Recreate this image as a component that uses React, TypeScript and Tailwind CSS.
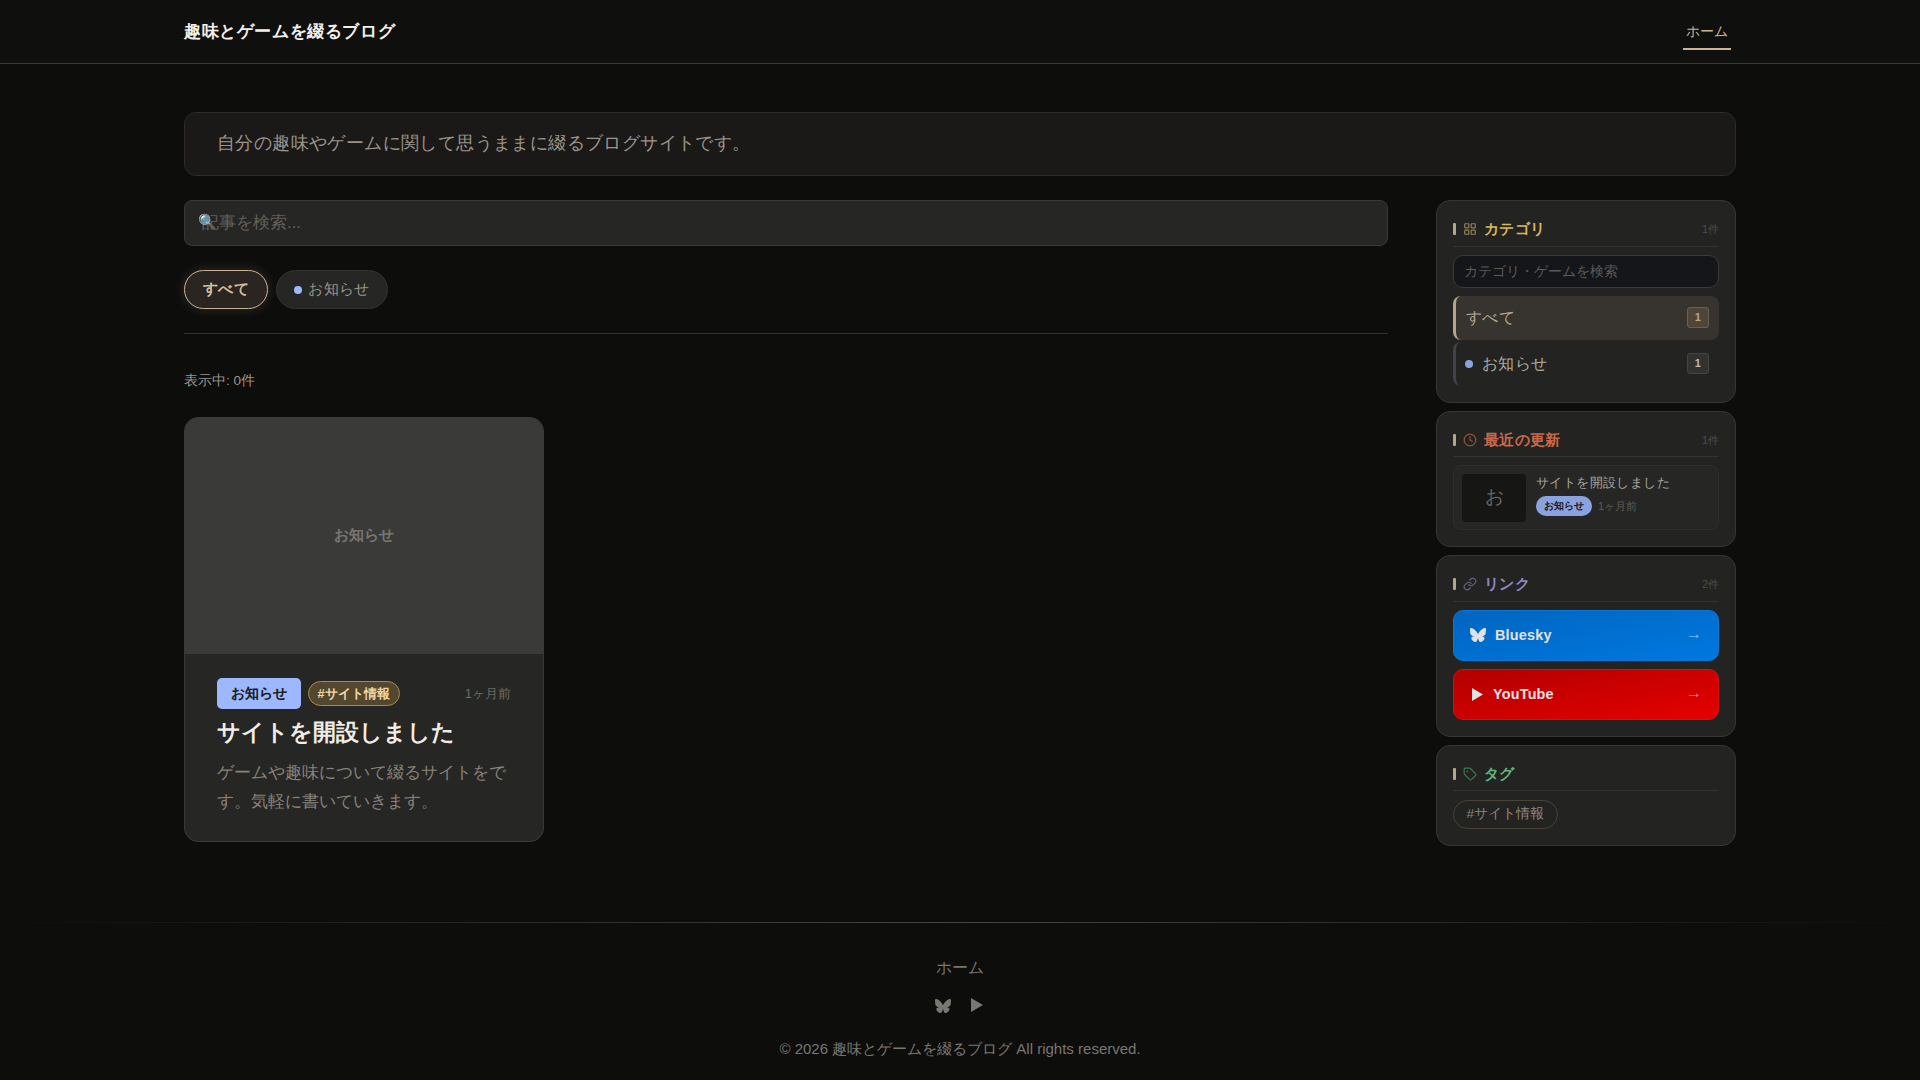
import { Clock, LayoutGrid, Link as LinkIcon, Tag } from "lucide-react";
import type { ReactNode } from "react";
import { FaBluesky } from "react-icons/fa6";

const SITE_NAME = "趣味とゲームを綴るブログ";

function PlayIcon({ className }: { className?: string }) {
  return (
    <svg viewBox="0 0 12 14" className={className} fill="currentColor" aria-hidden="true">
      <polygon points="0,0 12,7 0,14" />
    </svg>
  );
}

type SideCardProps = {
  icon: ReactNode;
  title: string;
  titleClass: string;
  count?: string;
  children: ReactNode;
};

function SideCard({ icon, title, titleClass, count, children }: SideCardProps) {
  return (
    <section className="rounded-[14px] border border-[#363633] bg-[#232322] p-[16px]">
      <div className="mb-[8px] flex h-[29.5px] items-start border-b border-[#343431]">
        <div className="flex h-[24px] items-center">
          <span className="mr-[7px] h-[12px] w-[3px] rounded-[1px] bg-[#b5a58c]" />
          {icon}
          <h2 className={`ml-[7px] text-[15.2px] leading-[24px] font-bold tracking-[0.3px] ${titleClass}`}>{title}</h2>
        </div>
        {count && <span className="ml-auto text-[11px] leading-[24px] text-[#4e4c48]">{count}</span>}
      </div>
      {children}
    </section>
  );
}

function LinkButton({ icon, label, gradient }: { icon: ReactNode; label: string; gradient: string }) {
  return (
    <a className={`flex h-[51px] items-center rounded-[10px] border pr-[16px] pl-[16px] ${gradient}`}>
      {icon}
      <span className="mt-[1px] text-[14.4px] font-bold tracking-[0.2px] text-[#e2e2e2]">{label}</span>
      <span className="-mt-[2px] ml-auto text-[16px] text-white/50">→</span>
    </a>
  );
}

export default function App() {
  return (
    <div className="min-h-[1080px] bg-[#0d0d0c] font-['Liberation_Sans',sans-serif] text-[#9a958c]">
      <header className="h-[64px] border-b border-[#3a3a38] bg-[#0f0f0e]">
        <div className="mx-auto flex h-[63px] w-[1552px] items-start justify-between">
          <h1 className="mt-[20px] text-[17.3px] leading-[22px] font-bold tracking-[0.6px] text-[#f2f0ea]">{SITE_NAME}</h1>
          <nav className="mt-[20px] mr-[5px]">
            <a className="block h-[30px] w-[48px] border-b-2 border-[#c9b496] text-center text-[14.4px] leading-[22px] text-[#c9b496]">
              ホーム
            </a>
          </nav>
        </div>
      </header>

      <main className="mx-auto w-[1552px] pt-[48px]">
        <p className="mb-[24px] flex h-[64px] items-center rounded-[12px] border border-[#2f2c27] bg-[#1a1917] px-[32px] pb-[2px] text-[17.6px] tracking-[0.4px] text-[#9a958c]">
          自分の趣味やゲームに関して思うままに綴るブログサイトです。
        </p>

        <div className="flex gap-[48px]">
          <div className="w-[1204px]">
            <div className="relative">
              <span className="absolute top-[13px] left-[14px] text-[15px] leading-[18px]">🔍</span>
              <input
                readOnly
                placeholder="記事を検索..."
                className="h-[46px] w-full rounded-[8px] border border-[#3a3a38] bg-[#262624] pr-[15px] pl-[17px] text-[16.8px] placeholder:text-[#62605b]"
              />
            </div>

            <div className="mt-[24px] flex gap-[8px] border-b border-[#333331] pb-[24px]">
              <button className="h-[39px] w-[84px] rounded-full border border-[#c9b496] bg-[#2a2520] text-[15.2px] font-bold tracking-[0.3px] text-[#d4bfa0] shadow-[0_0_12px_rgba(201,180,150,0.2)]">
                すべて
              </button>
              <button className="flex h-[39px] w-[112px] items-center justify-center gap-[6px] rounded-full border border-[#333331] bg-[#262624] text-[15.2px] tracking-[0.3px] text-[#9a958c]">
                <span className="h-[8px] w-[8px] rounded-full bg-[#9db8ff]" />
                お知らせ
              </button>
            </div>

            <p className="mt-[37px] mb-[26px] text-[13.6px] leading-[20px] text-[#9a958c]">表示中: 0件</p>

            <article className="w-[360px] overflow-hidden rounded-[14px] border border-[#3a3a38] bg-[#262624]">
              <div className="flex h-[236px] items-center justify-center bg-[#3a3a38] pb-[2px] text-[15.2px] font-bold text-[#777572]">
                お知らせ
              </div>
              <div className="px-[32px] pt-[24px] pb-[25px]">
                <div className="flex items-center">
                  <span className="flex h-[31px] items-center rounded-[5px] bg-[#9db8ff] px-[14px] text-[14.4px] font-bold text-[#1a1a1a]">
                    お知らせ
                  </span>
                  <span className="ml-[6.5px] flex h-[25px] items-center rounded-full border border-[#a88a4a] bg-[#544730] px-[9px] text-[12.8px] font-bold text-[#f0d8a0]">
                    #サイト情報
                  </span>
                  <span className="ml-auto text-[13px] text-[#6f6b66]">1ヶ月前</span>
                </div>
                <h3 className="mt-[7px] text-[23px] leading-[32px] font-bold text-[#f0ede6]">サイトを開設しました</h3>
                <p className="mt-[10px] text-[17px] leading-[29px] text-[#888278]">
                  ゲームや趣味について綴るサイトをです。気軽に書いていきます。
                </p>
              </div>
            </article>
          </div>

          <aside className="flex w-[300px] flex-col gap-[8px]">
            <SideCard
              icon={<LayoutGrid size={14} className="text-[#94825a]" />}
              title="カテゴリ"
              titleClass="text-[#d9b660]"
              count="1件"
            >
              <input
                readOnly
                placeholder="カテゴリ・ゲームを検索"
                className="h-[33px] w-full rounded-[10px] border border-[#3a3a38] bg-[#15161a] px-[10px] text-[13.6px] placeholder:text-[#5a5a58]"
              />
              <div className="mt-[8px] flex h-[44px] items-center rounded-[8px] border-l-[3px] border-[#b5a58c] bg-[#37342f] pr-[10px] pl-[10px] text-[16px] tracking-[0.3px] text-[#b5a58c]">
                すべて
                <span className="ml-auto flex h-[21px] w-[22px] items-center justify-center rounded-[3px] border border-[#6b5f50] bg-[#4f453a] text-[11px] font-bold">
                  1
                </span>
              </div>
              <div className="mt-[2px] flex h-[44px] items-center rounded-[8px] border-l-[3px] border-[#40444a] pr-[10px] pl-[9px] text-[16px] tracking-[0.3px] text-[#aaa89f]">
                <span className="mr-[9px] h-[8px] w-[8px] rounded-full bg-[#8aa3e0]" />
                お知らせ
                <span className="ml-auto flex h-[21px] w-[22px] items-center justify-center rounded-[3px] border border-[#46463f] bg-[#32322f] text-[11px] font-bold text-[#bbb]">
                  1
                </span>
              </div>
            </SideCard>

            <SideCard
              icon={<Clock size={14} className="text-[#8f5440]" />}
              title="最近の更新"
              titleClass="text-[#c8684a]"
              count="1件"
            >
              <div className="flex h-[65px] items-center rounded-[8px] border border-[#2e2e2c] bg-[#262624] px-[8px]">
                <div className="flex h-[48px] w-[64px] items-center justify-center rounded-[4px] bg-[#161614] text-[19px] text-[#666]">
                  お
                </div>
                <div className="mb-[5px] ml-[10px]">
                  <p className="text-[13.2px] leading-[18px] tracking-[0.4px] text-[#a8a49c]">サイトを開設しました</p>
                  <div className="mt-[4px] flex items-center gap-[6px]">
                    <span className="flex h-[20px] w-[56px] items-center justify-center rounded-full bg-[#8aa3e0] text-[10.4px] font-bold text-[#1a1a1a]">
                      お知らせ
                    </span>
                    <span className="text-[11.2px] text-[#5e5c58]">1ヶ月前</span>
                  </div>
                </div>
              </div>
            </SideCard>

            <SideCard
              icon={<LinkIcon size={14} className="text-[#66637f]" />}
              title="リンク"
              titleClass="text-[#8f8ac8]"
              count="2件"
            >
              <div className="flex flex-col gap-[8px]">
                <LinkButton
                  icon={<FaBluesky className="mr-[9px] h-[16px] w-[16px] text-[#e2e2e2]" />}
                  label="Bluesky"
                  gradient="border-[#0a78d8] bg-gradient-to-br from-[#0066c0] to-[#0078e0]"
                />
                <LinkButton
                  icon={<PlayIcon className="mr-[10px] ml-[2px] h-[13px] w-[11px] text-[#e2e2e2]" />}
                  label="YouTube"
                  gradient="border-[#d81010] bg-gradient-to-br from-[#b30000] to-[#e60000]"
                />
              </div>
            </SideCard>

            <SideCard
              icon={<Tag size={14} className="text-[#3f7a54]" />}
              title="タグ"
              titleClass="text-[#62b57e]"
            >
              <span className="mt-[1px] inline-flex h-[29px] items-center rounded-full border border-[#4a4438] px-[12.5px] text-[13.6px] text-[#8f8678]">
                #サイト情報
              </span>
            </SideCard>
          </aside>
        </div>
      </main>

      <footer className="mt-[76px] text-center">
        <div className="h-px bg-gradient-to-r from-transparent via-[#454543] to-transparent" />
        <a className="mt-[33.5px] block text-[16px] leading-[22px] text-[#7a7670]">ホーム</a>
        <div className="mt-[19px] flex justify-center gap-[20px] pr-[2px] text-[#7a7670]">
          <FaBluesky className="h-[16px] w-[16px]" />
          <PlayIcon className="h-[14px] w-[12px]" />
        </div>
        <p className="mt-[24px] text-[15px] leading-[22px] text-[#7a7670]">
          © 2026 {SITE_NAME} All rights reserved.
        </p>
      </footer>
    </div>
  );
}
